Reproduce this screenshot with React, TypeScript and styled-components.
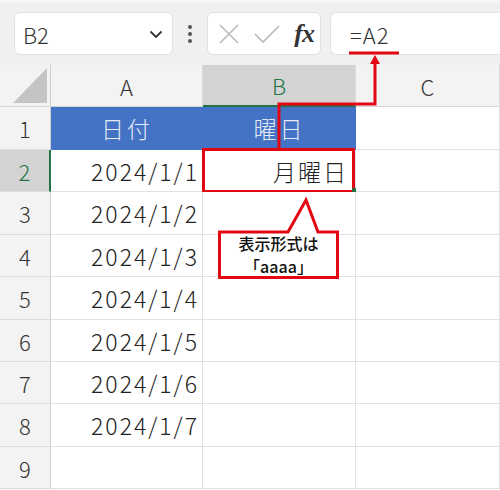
import React, { FC } from 'react'
import styled, { createGlobalStyle } from 'styled-components'

const GlobalStyle = createGlobalStyle`
  html, body {
    margin: 0;
    padding: 0;
    background: #fff;
  }
  body {
    font-family: "Noto Sans CJK JP", "Noto Sans", sans-serif;
    font-weight: 300;
  }
`

const columns = ['A', 'B', 'C']
const dates = ['2024/1/1', '2024/1/2', '2024/1/3', '2024/1/4', '2024/1/5', '2024/1/6', '2024/1/7']
const rowHeights = [43, 42, 43, 42, 43, 42, 42, 43, 42]

const RED = '#e30613'
const GREEN = '#217346'

const App: FC = () => {
  return (
    <Page>
      <GlobalStyle />
      <Toolbar>
        <NameBox>
          <span>B2</span>
          <svg width="16" height="16" viewBox="0 0 16 16">
            <path d="M2.5 5.5 L8 11 L13.5 5.5" fill="none" stroke="#333" strokeWidth="1.8" />
          </svg>
        </NameBox>
        <Dots>
          <i /><i /><i />
        </Dots>
        <IconBox>
          <svg width="22" height="22" viewBox="0 0 22 22">
            <path d="M2 2 L20 20 M20 2 L2 20" stroke="#b8b8b8" strokeWidth="1.6" />
          </svg>
          <svg width="28" height="22" viewBox="0 0 28 22">
            <path d="M2 11 L10 19 L26 3" fill="none" stroke="#b8b8b8" strokeWidth="1.6" />
          </svg>
          <Fx>fx</Fx>
        </IconBox>
        <FormulaBox>=A2</FormulaBox>
      </Toolbar>

      <Sheet>
        <Corner>
          <svg width="34" height="35" viewBox="0 0 34 35">
            <polygon points="34,0 34,35 0,35" fill="#c4c4c4" />
          </svg>
        </Corner>
        {columns.map(col => (
          <ColHeader key={col} selected={col === 'B'}>{col}</ColHeader>
        ))}

        {rowHeights.map((h, rI) => {
          const rowNo = rI + 1
          return (
            <React.Fragment key={`row_${rowNo}`}>
              <RowHeader selected={rowNo === 2} style={{ height: h }}>{rowNo}</RowHeader>
              {rowNo === 1 ? (
                <>
                  <TitleCell>日付</TitleCell>
                  <TitleCell>曜日</TitleCell>
                  <Cell />
                </>
              ) : (
                <>
                  <Cell>{dates[rI - 1] || ''}</Cell>
                  <Cell active={rowNo === 2}>
                    {rowNo === 2 && (
                      <>
                        月曜日
                        <ActiveFrame />
                        <FillHandle />
                      </>
                    )}
                  </Cell>
                  <Cell />
                </>
              )}
            </React.Fragment>
          )
        })}
      </Sheet>

      <ArrowLayer width="500" height="490" viewBox="0 0 500 490">
        <line x1="349" y1="53" x2="399" y2="53" stroke={RED} strokeWidth="3" />
        <polyline points="279,148 279,104 375,104 375,62" fill="none" stroke={RED} strokeWidth="3" />
        <polygon points="375,55 370,64 380,64" fill={RED} />
      </ArrowLayer>

      <Callout>
        <svg width="121" height="82" viewBox="0 0 121 82">
          <path d="M1.5 35 H70 L88 3 L100 35 H119.5 V80.5 H1.5 Z" fill="#fff" stroke={RED} strokeWidth="3" />
        </svg>
        <CalloutText>表示形式は</CalloutText>
        <CalloutText>「aaaa」</CalloutText>
      </Callout>
    </Page>
  )
}

const Page = styled.div`
  position: relative;
  width: 500px;
  height: 490px;
  overflow: hidden;
  background: #fff;
`

const Toolbar = styled.div`
  display: flex;
  align-items: center;
  height: 65px;
  box-sizing: border-box;
  padding: 10px 0 10px 14px;
  background: #f0f0f0;
  border-top: 2px solid #f7f7f7;
`

const Box = styled.div`
  display: flex;
  align-items: center;
  height: 43px;
  box-sizing: border-box;
  background: #fff;
  border: 1px solid #e2e2e2;
  border-radius: 6px;
`

const NameBox = styled(Box)`
  width: 159px;
  justify-content: space-between;
  padding: 0 8px 0 8px;
  font-size: 22px;
  color: #333;
`

const Dots = styled.div`
  display: flex;
  flex-direction: column;
  gap: 3px;
  width: 34px;
  align-items: center;
  i {
    display: block;
    width: 4px;
    height: 4px;
    border-radius: 50%;
    background: #555;
  }
`

const IconBox = styled(Box)`
  width: 114px;
  padding: 0 6px 0 10px;
  justify-content: space-between;
`

const Fx = styled.span`
  font-family: "Liberation Serif", "DejaVu Serif", serif;
  font-style: italic;
  font-weight: bold;
  font-size: 26px;
  color: #333;
  letter-spacing: -1px;
`

const FormulaBox = styled(Box)`
  flex: 1;
  margin-left: 9px;
  border-right: none;
  border-radius: 6px 0 0 6px;
  padding-left: 19px;
  font-size: 22px;
  letter-spacing: 1px;
  color: #333;
`

const Sheet = styled.div`
  display: grid;
  grid-template-columns: 51px 152px 153px 144px;
  grid-template-rows: 42px;
  grid-auto-rows: auto;
`

const Corner = styled.div`
  height: 42px;
  box-sizing: border-box;
  background: #f3f3f3;
  border-right: 1px solid #cfcfcf;
  border-bottom: 1px solid #d6d6d6;
  display: flex;
  align-items: flex-end;
  justify-content: flex-end;
  padding: 0 3px 3px 0;
`

const ColHeader = styled.div<{ selected?: boolean }>`
  height: 42px;
  box-sizing: border-box;
  display: flex;
  align-items: center;
  justify-content: center;
  font-size: 22px;
  background: ${({ selected }) => (selected ? '#d3d3d3' : '#f3f3f3')};
  color: ${({ selected }) => (selected ? GREEN : '#333')};
  border-right: 1px solid #dcdcdc;
  border-bottom: ${({ selected }) => (selected ? `2px solid ${GREEN}` : '1px solid #d6d6d6')};
`

const RowHeader = styled.div<{ selected?: boolean }>`
  box-sizing: border-box;
  display: flex;
  align-items: center;
  justify-content: center;
  font-size: 22px;
  background: ${({ selected }) => (selected ? '#d3d3d3' : '#f3f3f3')};
  color: ${({ selected }) => (selected ? GREEN : '#333')};
  border-bottom: 1px solid #dcdcdc;
  border-right: ${({ selected }) => (selected ? `2px solid ${GREEN}` : '1px solid #cfcfcf')};
`

const Cell = styled.div<{ active?: boolean }>`
  position: relative;
  box-sizing: border-box;
  display: flex;
  align-items: center;
  justify-content: flex-end;
  padding-right: 3px;
  font-size: 23px;
  letter-spacing: 2px;
  color: #222;
  border-right: 1px solid #e1e1e1;
  border-bottom: 1px solid #e1e1e1;
  background: #fff;
  ${({ active }) => active && 'padding-right: 7px; letter-spacing: 2px;'}
`

const TitleCell = styled.div`
  box-sizing: border-box;
  display: flex;
  align-items: center;
  justify-content: center;
  font-size: 23px;
  letter-spacing: 3px;
  color: #e4ebf7;
  background: #4472c4;
  border-bottom: 1px solid #4472c4;
`

const ActiveFrame = styled.div`
  position: absolute;
  left: -1px;
  top: -2px;
  right: 0px;
  bottom: -2px;
  border: 3px solid ${RED};
  pointer-events: none;
`

const FillHandle = styled.div`
  position: absolute;
  right: -2px;
  bottom: -2px;
  width: 5px;
  height: 5px;
  background: #2e6b3f;
`

const ArrowLayer = styled.svg`
  position: absolute;
  left: 0;
  top: 0;
  pointer-events: none;
`

const Callout = styled.div`
  position: absolute;
  left: 218px;
  top: 197px;
  width: 121px;
  height: 82px;
  box-sizing: border-box;
  padding-top: 35px;
  display: flex;
  flex-direction: column;
  align-items: center;
  svg {
    position: absolute;
    left: 0;
    top: 0;
  }
`

const CalloutText = styled.div`
  position: relative;
  font-size: 16px;
  line-height: 23px;
  font-weight: 500;
  color: #111;
`

export default App
